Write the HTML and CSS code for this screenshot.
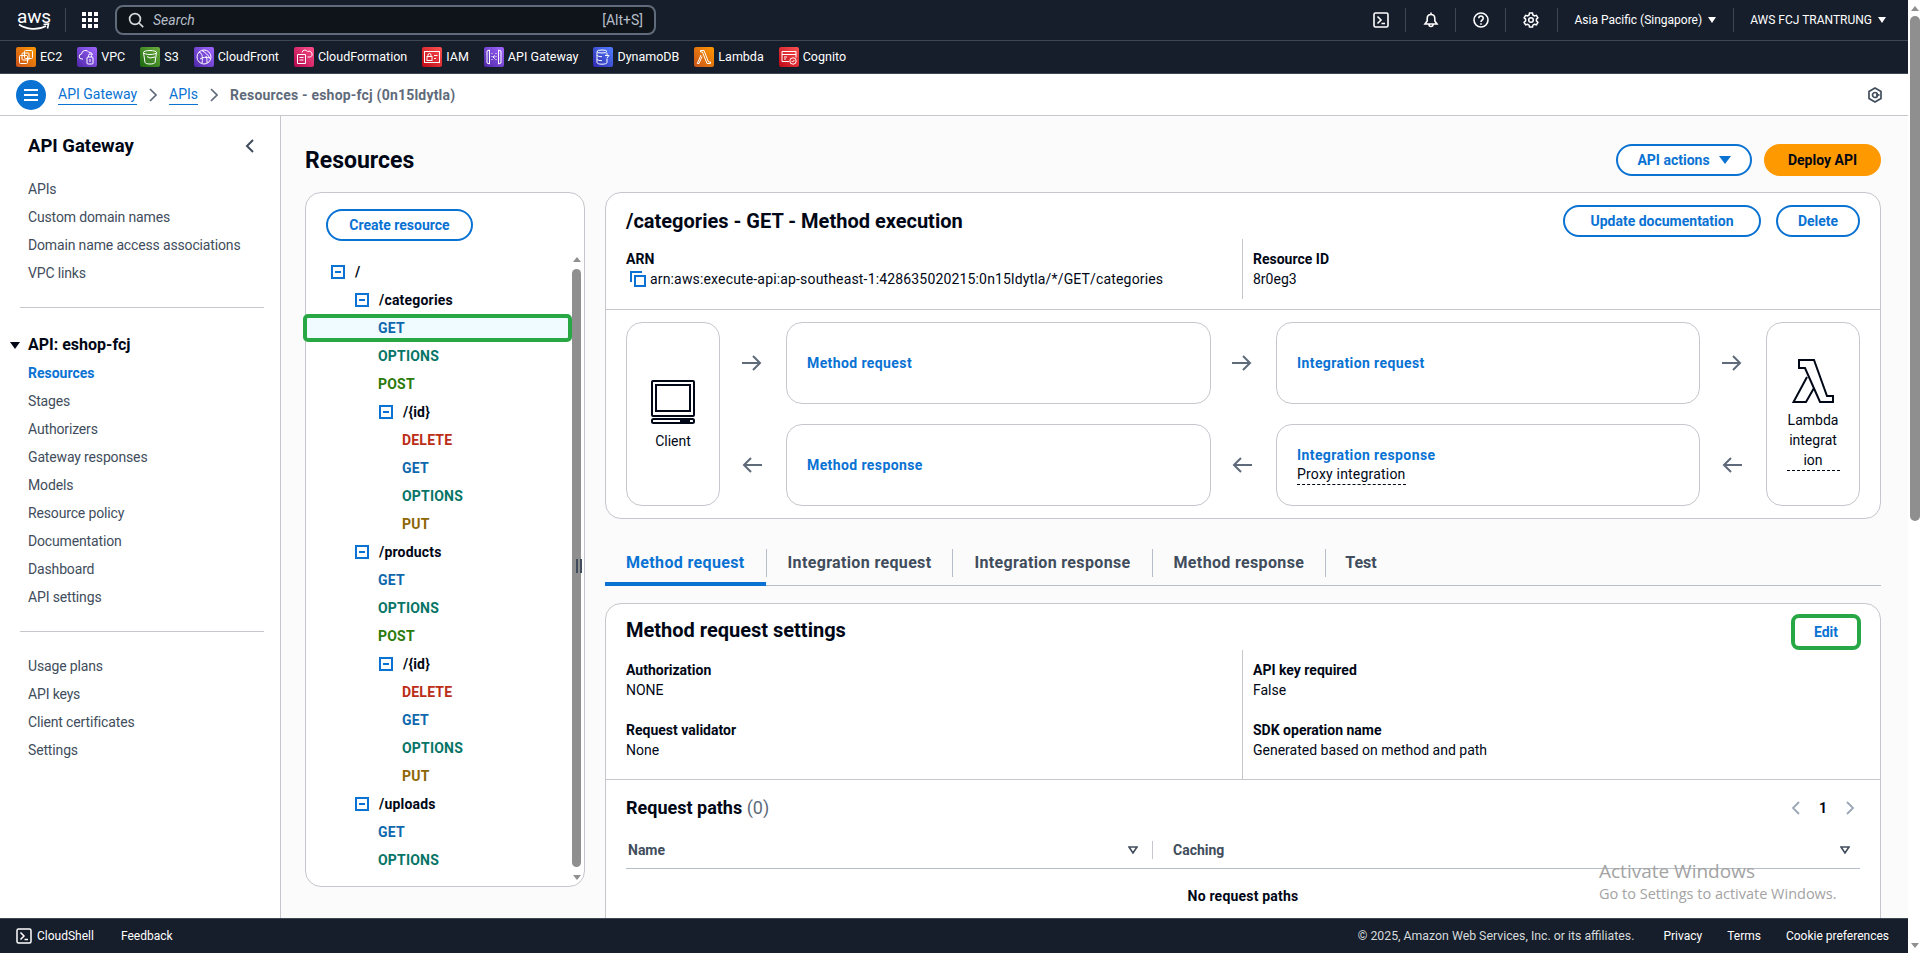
FILE: index.html
```html
<!DOCTYPE html>
<html lang="en">
<head>
<meta charset="utf-8">
<title>Resources - API Gateway</title>
<link rel="stylesheet" href="styles.css">
</head>
<body>
<div class="page">
  <header class="topnav">
    <div class="aws-logo"><span class="aws-word">aws</span><svg class="aws-smile" viewBox="0 0 32 8" width="32" height="8"><path d="M1 1.5C8 6.5 20 7.5 28 3" fill="none" stroke="#fff" stroke-width="1.8"/><path d="M25.5 1.5L30.5 1 29.5 5.5" fill="none" stroke="#fff" stroke-width="1.6"/></svg></div>
    <div class="nav-sep first"></div>
    <svg class="grid-icon" viewBox="0 0 16 16" width="16" height="16" fill="#fff"><rect x="0" y="0" width="4" height="4"/><rect x="6" y="0" width="4" height="4"/><rect x="12" y="0" width="4" height="4"/><rect x="0" y="6" width="4" height="4"/><rect x="6" y="6" width="4" height="4"/><rect x="12" y="6" width="4" height="4"/><rect x="0" y="12" width="4" height="4"/><rect x="6" y="12" width="4" height="4"/><rect x="12" y="12" width="4" height="4"/></svg>
    <div class="search">
      <svg viewBox="0 0 16 16" width="16" height="16" fill="none" stroke="#d5dbdb" stroke-width="1.7"><circle cx="7" cy="7" r="5.4"/><path d="M11 11l4.2 4.2"/></svg>
      <span class="search-text">Search</span>
      <span class="search-key">[Alt+S]</span>
    </div>
    <div class="nav-right">
      <svg class="nav-icon" viewBox="0 0 16 16" width="16" height="16" fill="none" stroke="#fff" stroke-width="1.6"><rect x="1" y="1" width="14" height="14" rx="1.5"/><path d="M4.5 4.5L8 8l-3.5 3.5M8.5 11.5H12"/></svg>
      <div class="nav-sep"></div>
      <svg class="nav-icon" viewBox="0 0 16 16" width="16" height="16" fill="none" stroke="#fff" stroke-width="1.6"><path d="M8 2.500C5.500 2.500 4.200 4.200 4.200 6.500V9L2 12h12l-2.200-3V6.500C11.800 4.200 10.500 2.500 8 2.500zM8 .5v2M6 12.500a2 2 0 0 0 4 0"/></svg>
      <div class="nav-sep"></div>
      <svg class="nav-icon" viewBox="0 0 16 16" width="16" height="16" fill="none" stroke="#fff" stroke-width="1.6"><circle cx="8" cy="8" r="7"/><path d="M5.800 6.200a2.200 2.200 0 1 1 3.400 1.800C8.400 8.500 8 9 8 10"/><path d="M8 11.200v1.500"/></svg>
      <div class="nav-sep"></div>
      <svg class="nav-icon" viewBox="0 0 16 16" width="16" height="16" fill="none" stroke="#fff" stroke-width="1.500"><path d="M6.500 1h3l.4 2 1.500.9 2-.6 1.500 2.500-1.500 1.400v1.700l1.500 1.400-1.500 2.500-2-.6-1.500.9-.4 2h-3l-.4-2-1.500-.9-2 .6-1.500-2.500 1.500-1.400V7.200L1.100 5.800l1.500-2.500 2 .6 1.500-.9z"/><circle cx="8" cy="8" r="2.300"/></svg>
      <div class="nav-sep wide lead"></div>
      <span class="nav-label">Asia Pacific (Singapore)</span><span class="nav-caret"></span>
      <div class="nav-sep wide"></div>
      <span class="nav-label">AWS FCJ TRANTRUNG</span><span class="nav-caret"></span>
    </div>
  </header>

  <nav class="servicebar">
    <a class="svc"><span class="svc-ico orange"><svg viewBox="0 0 20 20" width="20" height="20" fill="none" stroke="#fff" stroke-width="1"><rect x="8.500" y="3.500" width="8" height="8" rx="1"/><rect x="6" y="6" width="7" height="7" rx="1"/><rect x="3.500" y="8.500" width="8" height="8" rx="1"/></svg></span>EC2</a>
    <a class="svc"><span class="svc-ico purple"><svg viewBox="0 0 20 20" width="20" height="20" fill="none" stroke="#fff" stroke-width="1"><path d="M6 12H5a2.500 2.500 0 0 1-.5-5 4 4 0 0 1 7.500-1.500 3 3 0 0 1 3.500 2.500"/><rect x="10" y="10" width="6" height="7" rx="1"/><path d="M11.500 10V8.500a1.500 1.500 0 0 1 3 0V10M13 12v3"/></svg></span>VPC</a>
    <a class="svc"><span class="svc-ico green"><svg viewBox="0 0 20 20" width="20" height="20" fill="none" stroke="#fff" stroke-width="1"><ellipse cx="10" cy="5.500" rx="6.500" ry="2"/><path d="M3.500 5.500L5 15.500c.3 1 2.500 1.500 5 1.500s4.700-.5 5-1.500l1.500-10M7 9.500l3 1.500 5-1"/></svg></span>S3</a>
    <a class="svc"><span class="svc-ico purple"><svg viewBox="0 0 20 20" width="20" height="20" fill="none" stroke="#fff" stroke-width="1"><circle cx="10" cy="10" r="7"/><path d="M5 5c3 1 4 4 3 11M8 3.500c3 2 6 4 8 8M6 12c3-2 6-2 10-1M13 16c0-3 0-5-1-7"/></svg></span>CloudFront</a>
    <a class="svc"><span class="svc-ico pink"><svg viewBox="0 0 20 20" width="20" height="20" fill="none" stroke="#fff" stroke-width="1"><path d="M3.500 7.500h8v9h-8zM5.500 10.500h4M5.500 13h4"/><path d="M8 5.500a3 3 0 0 1 5.500-1 2.800 2.800 0 0 1 3 5.500h-3"/></svg></span>CloudFormation</a>
    <a class="svc"><span class="svc-ico red"><svg viewBox="0 0 20 20" width="20" height="20" fill="none" stroke="#fff" stroke-width="1"><rect x="2.500" y="4.500" width="15" height="11"/><rect x="5" y="9.500" width="5" height="4"/><path d="M6 9.500V8a1.500 1.500 0 0 1 3 0v1.500M12 8.500h3.500M12 11.500h2"/></svg></span>IAM</a>
    <a class="svc"><span class="svc-ico purple"><svg viewBox="0 0 20 20" width="20" height="20" fill="none" stroke="#fff" stroke-width="1"><path d="M5.500 3L3 4v12l2.500 1zM14.500 3L17 4v12l-2.500 1zM8 6v1M8 9v1M8 12v1M12 6v1M12 9v1M12 12v1M11 8.500L9 10l2 1.500"/></svg></span>API Gateway</a>
    <a class="svc"><span class="svc-ico blue"><svg viewBox="0 0 20 20" width="20" height="20" fill="none" stroke="#fff" stroke-width="1"><ellipse cx="9" cy="4.500" rx="5" ry="1.500"/><path d="M4 4.500v11c0 1 2 1.700 5 1.700s5-.7 5-1.700v-4M4 8c0 1 2 1.700 5 1.700M4 12c0 1 2 1.700 5 1.700M14 6v2M12 8.500h4l-2 2.500"/></svg></span>DynamoDB</a>
    <a class="svc"><span class="svc-ico orange"><svg viewBox="0 0 20 20" width="20" height="20" fill="none" stroke="#fff" stroke-width="1"><path d="M6.500 3.500h3.500l4.500 11.500h2v1.500h-3.500L9 6.500l-.5-1.500h-2zM8 9.500l-3 7H3.300l3.700-8.500"/></svg></span>Lambda</a>
    <a class="svc"><span class="svc-ico red"><svg viewBox="0 0 20 20" width="20" height="20" fill="none" stroke="#fff" stroke-width="1"><path d="M10 14.500H3V4.500h14v6M3 7.500h14M5 10h3M5 12h2"/><circle cx="14" cy="14" r="3.200"/><path d="M12.600 14l1 1 1.800-2"/></svg></span>Cognito</a>
  </nav>

  <div class="crumbs">
    <button class="menu-btn" type="button"><span></span><span></span><span></span></button>
    <a class="crumb-link">API Gateway</a>
    <svg class="crumb-sep" viewBox="0 0 8 14" width="8" height="14" fill="none" stroke="#5f6b7a" stroke-width="1.700"><path d="M1 1l6 6-6 6"/></svg>
    <a class="crumb-link">APIs</a>
    <svg class="crumb-sep" viewBox="0 0 8 14" width="8" height="14" fill="none" stroke="#5f6b7a" stroke-width="1.700"><path d="M1 1l6 6-6 6"/></svg>
    <span class="crumb-current">Resources - eshop-fcj (0n15ldytla)</span>
    <svg class="crumb-hex" viewBox="0 0 16 16" width="16" height="16" fill="none" stroke="#414d5c" stroke-width="1.700"><path d="M8 1l6 3.500v7L8 15l-6-3.500v-7z"/><circle cx="8" cy="8" r="2.500"/><path d="M9 8h3.500"/></svg>
  </div>

  <div class="body-row">
    <aside class="sidenav">
      <div class="side-head"><span class="side-title">API Gateway</span>
        <svg viewBox="0 0 10 16" width="10" height="16" fill="none" stroke="#414d5c" stroke-width="2"><path d="M8 2L2 8l6 6"/></svg></div>
      <a class="side-link">APIs</a>
      <a class="side-link">Custom domain names</a>
      <a class="side-link">Domain name access associations</a>
      <a class="side-link">VPC links</a>
      <hr class="side-rule">
      <div class="side-section"><span class="side-caret"></span>API: eshop-fcj</div>
      <a class="side-link active">Resources</a>
      <a class="side-link">Stages</a>
      <a class="side-link">Authorizers</a>
      <a class="side-link">Gateway responses</a>
      <a class="side-link">Models</a>
      <a class="side-link">Resource policy</a>
      <a class="side-link">Documentation</a>
      <a class="side-link">Dashboard</a>
      <a class="side-link">API settings</a>
      <hr class="side-rule">
      <a class="side-link">Usage plans</a>
      <a class="side-link">API keys</a>
      <a class="side-link">Client certificates</a>
      <a class="side-link">Settings</a>
    </aside>

    <main class="main">
      <div class="page-head">
        <h1>Resources</h1>
        <div class="head-actions">
          <button class="btn btn-actions" type="button">API actions<span class="btn-caret"></span></button>
          <button class="btn btn-primary" type="button">Deploy API</button>
        </div>
      </div>
      <div class="columns">
        <section class="tree-panel">
          <button class="btn btn-create" type="button">Create resource</button>
          <div class="tree-wrap">
            <div class="tree">
              <div class="row res l0"><span class="minus"></span>/</div>
              <div class="row res l1"><span class="minus"></span>/categories</div>
              <div class="row m1 get selected">GET</div>
              <div class="row m1 options">OPTIONS</div>
              <div class="row m1 post">POST</div>
              <div class="row res l2"><span class="minus"></span>/{id}</div>
              <div class="row m2 delete">DELETE</div>
              <div class="row m2 get">GET</div>
              <div class="row m2 options">OPTIONS</div>
              <div class="row m2 put">PUT</div>
              <div class="row res l1"><span class="minus"></span>/products</div>
              <div class="row m1 get">GET</div>
              <div class="row m1 options">OPTIONS</div>
              <div class="row m1 post">POST</div>
              <div class="row res l2"><span class="minus"></span>/{id}</div>
              <div class="row m2 delete">DELETE</div>
              <div class="row m2 get">GET</div>
              <div class="row m2 options">OPTIONS</div>
              <div class="row m2 put">PUT</div>
              <div class="row res l1"><span class="minus"></span>/uploads</div>
              <div class="row m1 get">GET</div>
              <div class="row m1 options">OPTIONS</div>
            </div>
            <div class="tree-scroll">
              <span class="sb-up"></span>
              <span class="sb-thumb"></span>
              <span class="sb-down"></span>
            </div>
          </div>
          <span class="grip"></span>
        </section>

        <div class="detail">
          <section class="card">
            <div class="card-head">
              <h2>/categories - GET - Method execution</h2>
              <div class="card-actions">
                <button class="btn btn-line" type="button">Update documentation</button>
                <button class="btn btn-line" type="button">Delete</button>
              </div>
            </div>
            <div class="kv-row exec-kv">
              <div class="kv-col">
                <div class="kv-key">ARN</div>
                <div class="kv-val arn"><svg viewBox="0 0 16 16" width="16" height="16" fill="none" stroke="#0972d3" stroke-width="2"><path d="M1 11V1h11"/><rect x="5" y="5" width="10" height="10"/></svg>arn:aws:execute-api:ap-southeast-1:428635020215:0n15ldytla/*/GET/categories</div>
              </div>
              <div class="kv-col right">
                <div class="kv-key">Resource ID</div>
                <div class="kv-val">8r0eg3</div>
              </div>
            </div>
            <div class="flow">
              <div class="flow-box endpoint client">
                <svg viewBox="0 0 44 44" width="44" height="44" fill="none" stroke="#000716" stroke-width="2"><rect x="1" y="1" width="42" height="35" rx="1"/><rect x="5" y="5" width="34" height="26"/><rect x="1" y="39" width="42" height="4" rx="1.500"/><path d="M29 41h10" stroke-width="3"/></svg>
                <span>Client</span>
              </div>
              <svg class="arrow" viewBox="0 0 20 16" width="20" height="16" fill="none" stroke="#5f6b7a" stroke-width="2"><path d="M0 8h18M11 1l7 7-7 7"/></svg>
              <div class="flow-box step"><a>Method request</a></div>
              <svg class="arrow" viewBox="0 0 20 16" width="20" height="16" fill="none" stroke="#5f6b7a" stroke-width="2"><path d="M0 8h18M11 1l7 7-7 7"/></svg>
              <div class="flow-box step"><a>Integration request</a></div>
              <svg class="arrow" viewBox="0 0 20 16" width="20" height="16" fill="none" stroke="#5f6b7a" stroke-width="2"><path d="M0 8h18M11 1l7 7-7 7"/></svg>
              <div class="flow-box endpoint lambda">
                <svg viewBox="0 0 42 44" width="42" height="44" fill="none" stroke="#000716" stroke-width="2"><path d="M7 1h15l13 36h6v6H28L13 9H7zM15 18L1.500 43H14l8-14"/></svg>
                <span class="dashed">Lambda<br>integrat<br>ion</span>
              </div>
              <svg class="arrow" viewBox="0 0 20 16" width="20" height="16" fill="none" stroke="#5f6b7a" stroke-width="2"><path d="M20 8H2M9 1L2 8l7 7"/></svg>
              <div class="flow-box step"><a>Method response</a></div>
              <svg class="arrow" viewBox="0 0 20 16" width="20" height="16" fill="none" stroke="#5f6b7a" stroke-width="2"><path d="M20 8H2M9 1L2 8l7 7"/></svg>
              <div class="flow-box step"><a>Integration response</a><span class="proxy">Proxy integration</span></div>
              <svg class="arrow" viewBox="0 0 20 16" width="20" height="16" fill="none" stroke="#5f6b7a" stroke-width="2"><path d="M20 8H2M9 1L2 8l7 7"/></svg>
            </div>
          </section>

          <div class="tabs">
            <span class="tab active">Method request</span>
            <span class="tab">Integration request</span>
            <span class="tab">Integration response</span>
            <span class="tab">Method response</span>
            <span class="tab">Test</span>
          </div>

          <section class="card settings">
            <div class="settings-head">
              <h2>Method request settings</h2>
              <button class="btn btn-edit" type="button">Edit</button>
            </div>
            <div class="kv-row settings-kv">
              <div class="kv-col">
                <div class="kv-key">Authorization</div>
                <div class="kv-val">NONE</div>
                <div class="kv-key spaced">Request validator</div>
                <div class="kv-val">None</div>
              </div>
              <div class="kv-col right">
                <div class="kv-key">API key required</div>
                <div class="kv-val">False</div>
                <div class="kv-key spaced">SDK operation name</div>
                <div class="kv-val">Generated based on method and path</div>
              </div>
            </div>
            <div class="paths">
              <div class="paths-head">
                <h3>Request paths <span class="count">(0)</span></h3>
                <div class="pager">
                  <svg viewBox="0 0 10 16" width="10" height="16" fill="none" stroke="#9ba7b6" stroke-width="1.800"><path d="M8 2L2 8l6 6"/></svg>
                  <span>1</span>
                  <svg viewBox="0 0 10 16" width="10" height="16" fill="none" stroke="#9ba7b6" stroke-width="1.800"><path d="M2 2l6 6-6 6"/></svg>
                </div>
              </div>
              <div class="table-head">
                <div class="th name">Name<svg viewBox="0 0 10 8" width="10" height="8" fill="none" stroke="#414d5c" stroke-width="1.600"><path d="M1 1h8L5 7z"/></svg></div>
                <div class="th caching">Caching<svg viewBox="0 0 10 8" width="10" height="8" fill="none" stroke="#414d5c" stroke-width="1.600"><path d="M1 1h8L5 7z"/></svg></div>
              </div>
              <div class="empty">No request paths</div>
            </div>
          </section>
        </div>
      </div>
    </main>
  </div>

  <footer class="footer">
    <svg viewBox="0 0 16 16" width="16" height="16" fill="none" stroke="#fff" stroke-width="1.500"><rect x="1" y="1" width="14" height="14" rx="1.500"/><path d="M4.500 4.500L8 8l-3.500 3.500M8.500 11.500H12"/></svg>
    <span class="foot-link cs">CloudShell</span>
    <span class="foot-link fb">Feedback</span>
    <span class="foot-copy">© 2025, Amazon Web Services, Inc. or its affiliates.</span>
    <span class="foot-link priv">Privacy</span>
    <span class="foot-link">Terms</span>
    <span class="foot-link">Cookie preferences</span>
  </footer>
</div>

<div class="vscroll">
  <span class="sb-up"></span>
  <span class="sb-thumb"></span>
  <span class="sb-down"></span>
</div>

<div class="watermark">
  <div class="wm-title">Activate Windows</div>
  <div class="wm-sub">Go to Settings to activate Windows.</div>
</div>
</body>
</html>
```

FILE: styles.css
```css
* { box-sizing: border-box; }
html, body { margin: 0; height: 953px; overflow: hidden; }
body {
  display: flex;
  font-family: Roboto, "Liberation Sans", sans-serif;
  font-size: 14px;
  line-height: 20px;
  color: #000716;
  background: #fff;
}
a { color: inherit; }
button { font-family: inherit; }

.page { width: 1908px; height: 953px; display: flex; flex-direction: column; }

/* top navigation */
.topnav {
  height: 41px; flex: none; display: flex; align-items: center;
  background: #161d2b; border-bottom: 1px solid #414750; color: #fff;
  padding-left: 18px;
}
.aws-logo { width: 32px; height: 24px; display: flex; flex-direction: column; align-items: center; }
.aws-word { font-size: 19px; line-height: 17px; letter-spacing: -.2px; }
.aws-smile { margin-top: -2px; }
.nav-sep { width: 1px; height: 24px; background: #414750; margin: 0 16.5px; }
.nav-sep.first { margin: 0 16px 0 15px; }
.nav-sep.wide { margin: 0 16.5px; }
.nav-sep.wide.lead { margin-left: 18px; }
.grid-icon { flex: none; }
.search {
  width: 541px; height: 30px; margin-left: 17px; display: flex; align-items: center; gap: 9px;
  background: #0f141a; border: 2px solid #5f6b7a; border-radius: 8px; padding: 0 11px 0 11px;
  font-size: 14px; color: #b6bec9;
}
.search-text { font-style: italic; flex: 1; }
.nav-right { margin-left: auto; display: flex; align-items: center; font-size: 12px; padding-right: 22px; }
.nav-icon { flex: none; }
.nav-caret { width: 0; height: 0; margin-left: 6px; border-left: 4px solid transparent; border-right: 4px solid transparent; border-top: 6px solid #fff; }

/* service shortcuts */
.servicebar {
  height: 33px; flex: none; display: flex; align-items: center; gap: 15px;
  background: #161d2b; color: #fff; padding-left: 16px; font-size: 12.500px;
  border-bottom: 1px solid #414750;
}
.svc { display: flex; align-items: center; gap: 4px; }
.svc-ico { width: 20px; height: 20px; border-radius: 2px; display: block; }
.svc-ico svg { display: block; }
.orange { background: linear-gradient(45deg, #c8511b, #ff9900); }
.purple { background: linear-gradient(45deg, #4d27a8, #a166ff); }
.green { background: linear-gradient(45deg, #1b660f, #6cae3e); }
.pink { background: linear-gradient(45deg, #b0084d, #ff4f8b); }
.red { background: linear-gradient(45deg, #bd0816, #ff5252); }
.blue { background: linear-gradient(45deg, #2e27ad, #527fff); }

/* breadcrumbs */
.crumbs {
  height: 42px; flex: none; display: flex; align-items: center;
  background: #fff; border-bottom: 1px solid #c6c6cd; padding: 0 25px 0 16px;
  font-size: 14px;
}
.menu-btn {
  width: 30px; height: 30px; border: 0; border-radius: 50%; background: #0972d3; padding: 0;
  display: flex; flex-direction: column; justify-content: center; align-items: center; gap: 3px;
  margin-right: 12px;
}
.menu-btn span { width: 14px; height: 2px; background: #fff; display: block; }
.crumb-link { color: #0972d3; border-bottom: 1px solid #0972d3; line-height: 19px; }
.crumb-sep { margin: 0 12px; flex: none; }
.crumb-current { color: #5f6b7a; font-weight: 700; letter-spacing: .2px; }
.crumb-hex { margin-left: auto; }

/* body */
.body-row { flex: 1; min-height: 0; display: flex; overflow: hidden; background: #fbfbfb; }

.sidenav {
  width: 281px; flex: none; background: #fff; border-right: 1px solid #c6c6cd;
  padding: 16px 12px 0 28px; color: #414d5c;
}
.side-head { height: 28px; display: flex; align-items: center; justify-content: space-between; margin-bottom: 15px; color: #000716; padding-right: 13px; }
.side-title { font-size: 18.500px; font-weight: 700; }
.side-link { display: block; height: 28px; line-height: 28px; letter-spacing: -.15px; }
.side-link.active { color: #0972d3; font-weight: 700; letter-spacing: 0; }
.side-rule { border: 0; border-top: 1px solid #c6c6cd; margin: 20px 4px 20px -8px; }
.side-rule + .side-section { margin-top: 23px; }
.side-section { height: 28px; line-height: 28px; font-weight: 700; font-size: 16px; color: #000716; position: relative; display: flex; align-items: center; }
.side-caret { width: 0; height: 0; margin-left: -18px; margin-right: 8px; border-left: 5px solid transparent; border-right: 5px solid transparent; border-top: 7px solid #000716; }

.main { flex: 1; min-width: 0; padding: 28px 27px 0 24px; display: flex; flex-direction: column; }
.page-head { display: flex; align-items: center; justify-content: space-between; height: 32px; margin-bottom: 16px; }
h1 { margin: 2px 0 0; font-size: 23px; line-height: 32px; font-weight: 700; }
.head-actions { display: flex; gap: 12px; }

.btn {
  height: 32px; border-radius: 16px; font-size: 14px; font-weight: 700; line-height: 18px; padding: 0 12px; cursor: pointer;
  border: 2px solid #0972d3; background: #fff; color: #0972d3; white-space: nowrap;
  display: inline-flex; align-items: center; justify-content: center;
}
.btn-primary { background: #ff9900; border-color: #ff9900; color: #000716; width: 117px; }
.btn-actions { width: 136px; }
.btn-caret { width: 0; height: 0; margin-left: 9px; border-left: 6px solid transparent; border-right: 6px solid transparent; border-top: 8px solid #0972d3; }

.columns { display: flex; gap: 20px; align-items: flex-start; }

/* resource tree */
.tree-panel {
  width: 280px; height: 695px; flex: none; position: relative;
  background: #fff; border: 1px solid #c6c6cd; border-radius: 16px; padding-top: 16px;
}
.btn-create { width: 147px; margin-left: 20px; display: flex; }
.tree-wrap { display: flex; margin-top: 13px; padding-right: 3px; }
.tree { flex: 1; min-width: 0; padding-top: 3.500px; }
.row { height: 28px; line-height: 28px; font-weight: 700; display: flex; align-items: center; letter-spacing: .2px; }
.res { color: #000716; }
.l0 { padding-left: 25px; }
.l1 { padding-left: 49px; }
.l2 { padding-left: 73px; }
.m1 { padding-left: 72px; }
.m2 { padding-left: 96px; }
.minus { width: 14px; height: 14px; border: 2px solid #0972d3; margin-right: 10px; flex: none; display: flex; align-items: center; justify-content: center; }
.minus::before { content: ""; width: 6px; height: 2px; background: #0972d3; }
.get { color: #0f68ad; }
.options { color: #067466; }
.post { color: #2b7a0b; }
.delete { color: #bc2d17; }
.put { color: #8d6605; }
.selected {
  margin-left: -3px; padding-left: 71px; background: #f0fbff;
  border: 4px solid #28a745; border-radius: 5px;
}
.tree-scroll { width: 9px; height: 629px; flex: none; display: flex; flex-direction: column; align-items: center; }
.sb-thumb { width: 100%; background: #8f8f8f; border-radius: 5px; display: block; }
.tree-scroll .sb-thumb { height: 598px; margin-top: 7px; }
.sb-up, .sb-down { width: 0; height: 0; display: block; border-left: 4.500px solid transparent; border-right: 4.500px solid transparent; flex: none; }
.sb-up { border-bottom: 5px solid #8f8f8f; margin-top: 3px; }
.sb-down { border-top: 5px solid #8f8f8f; margin-top: 8px; }
.grip { position: absolute; left: 270px; top: 366px; width: 6px; height: 14px; border-left: 2px solid #414d5c; border-right: 2px solid #414d5c; }

/* detail column */
.detail { flex: 1; min-width: 0; }
.card { background: #fff; border: 1px solid #c6c6cd; border-radius: 16px; }
.card-head { display: flex; justify-content: space-between; align-items: center; padding: 12px 20px 0; height: 44px; }
h2 { margin: 0; font-size: 20px; line-height: 28px; font-weight: 700; }
.card-actions { display: flex; gap: 15px; }
.btn-line:first-child { width: 198px; }
.btn-line:last-child { width: 84px; }

.kv-row { display: flex; padding: 0 20px; }
.exec-kv { padding-top: 2px; padding-bottom: 10px; border-bottom: 1px solid #c6c6cd; }
.kv-col { width: 616px; padding-top: 10px; }
.kv-col.right { flex: 1; width: auto; border-left: 1px solid #c6c6cd; padding-left: 10px; }
.kv-key { font-weight: 700; }
.kv-key.spaced { margin-top: 20px; }
.exec-kv .kv-col { height: 60px; }
.arn { display: flex; align-items: center; gap: 4px; padding-left: 4px; letter-spacing: .16px; }
.arn svg { flex: none; }

.flow {
  display: grid; padding: 12px 20px 12px;
  grid-template-columns: 94px 66px 425px 65px 424px 66px 94px;
  grid-template-rows: 82px 82px; row-gap: 20px;
  justify-items: center; align-items: center;
}
.arrow { margin-right: 3px; }
.flow-box { background: #fff; border: 1px solid #c6c6cd; border-radius: 16px; width: 100%; height: 100%; }
.endpoint { grid-row: 1 / span 2; display: flex; flex-direction: column; align-items: center; justify-content: center; text-align: center; padding-top: 3px; }
.client { grid-column: 1; }
.client span { margin-top: 7px; }
.lambda { grid-column: 7; padding-top: 1px; }
.lambda span { margin-top: 7px; }
.dashed { display: block; width: 53px; border-bottom: 1px dashed #000716; padding-bottom: 0; }
.step { padding: 0 20px; display: flex; flex-direction: column; justify-content: center; }
.step a { color: #0972d3; font-weight: 700; letter-spacing: .4px; }
.proxy { border-bottom: 1px dashed #000716; align-self: flex-start; line-height: 19px; letter-spacing: .2px; }

/* tabs */
.tabs { display: flex; margin-top: 22px; height: 45px; border-bottom: 1px solid #b6bec9; padding-top: 8px; align-items: flex-start; }
.tab {
  height: 28px; line-height: 28px; padding: 0 21px; font-size: 16px; font-weight: 700; color: #414d5c;
  border-left: 1px solid #b6bec9; position: relative; letter-spacing: .35px;
}
.tab:last-child { letter-spacing: 0; padding-left: 19px; }
.tab.active { border-left: 0; color: #0972d3; box-shadow: 0 5px 0 0 #fbfbfb, 0 9px 0 0 #0972d3; }

/* settings card */
.settings { margin-top: 17px; border-radius: 16px 16px 0 0; height: 400px; }
.settings-head { display: flex; justify-content: space-between; align-items: center; height: 44px; padding: 0 19px 0 20px; margin-top: 4px; }
.btn-edit {
  width: 70px; height: 36px; border-radius: 8px; background: #fff; color: #0972d3;
  border: 4px solid #28a745; margin-top: 4px;
}
.settings-kv { margin-top: -2px; }
.settings-kv .kv-col { height: 129px; padding-top: 10px; }
.paths { border-top: 1px solid #c6c6cd; padding: 16px 20px 0; }
.paths-head { display: flex; justify-content: space-between; align-items: center; height: 24px; padding-right: 5px; }
h3 { margin: 0; font-size: 18px; line-height: 24px; font-weight: 700; }
.count { font-weight: 400; color: #5f6b7a; }
.pager { display: flex; align-items: center; gap: 18px; font-weight: 700; }
.table-head { display: flex; margin-top: 21px; height: 28px; border-bottom: 1px solid #b6bec9; padding-left: 2px; color: #414d5c; font-weight: 700; }
.th { display: flex; justify-content: space-between; align-items: center; height: 18px; padding-right: 9px; }
.th.name { width: 525px; border-right: 1px solid #c6c6cd; padding-right: 14px; }
.th.caching { flex: 1; padding-left: 20px; padding-right: 10px; }
.empty { text-align: center; font-weight: 700; padding-top: 17px; letter-spacing: .2px; }

/* footer */
.footer {
  height: 35px; flex: none; display: flex; align-items: center;
  background: #161d2b; border-top: 1px solid #414750; color: #fff;
  padding: 0 19px 0 16px; font-size: 12px;
}
.foot-link { margin-left: 25px; }
.foot-link.priv { margin-left: 29px; }
.foot-link.cs { margin-left: 5px; }
.foot-link.fb { margin-left: 27px; }
.foot-copy { margin-left: auto; color: #d5dbdb; font-size: 12.300px; }

/* page scrollbar */
.vscroll { width: 12px; flex: none; display: flex; flex-direction: column; align-items: center; background: #fff; }
.vscroll .sb-thumb { height: 505px; width: 10px; margin: 5px 0 0 1px; }
.vscroll .sb-up { margin: 6px 0 0 1px; }
.vscroll .sb-down { margin: auto 0 5px 1px; }

/* OS activation notice */
.watermark { position: absolute; left: 1599px; top: 858px; color: #a3a3a3; pointer-events: none; font-family: "Open Sans", sans-serif; }
.wm-title { font-size: 19px; line-height: 26px; }
.wm-sub { font-size: 14.500px; line-height: 20px; }
```
